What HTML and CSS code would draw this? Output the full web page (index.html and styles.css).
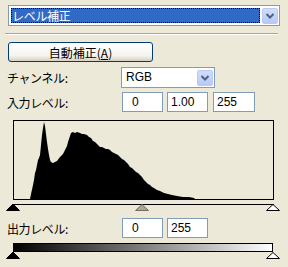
FILE: index.html
```html
<!DOCTYPE html>
<html lang="ja">
<head>
    <meta charset="UTF-8">
    <title>レベル補正</title>
    <link rel="stylesheet" href="styles.css">
</head>
<body>
<div class="panel">
    <div class="combo wide">
        <span class="combo-value selected">レベル補正</span>
        <span class="combo-arrow">
            <svg width="16" height="16" viewBox="0 0 16 16"><path d="M4.5 6 L8 9.5 L11.5 6" fill="none" stroke="#4d6185" stroke-width="2"/></svg>
        </span>
    </div>
    <hr class="sep">
    <button class="btn">自動補正(<u>A</u>)</button>

    <div class="row channel">
        <span class="label">チャンネル:</span>
        <div class="combo small">
            <span class="combo-value">RGB</span>
            <span class="combo-arrow">
                <svg width="16" height="16" viewBox="0 0 16 16"><path d="M4.5 6 L8 9.5 L11.5 6" fill="none" stroke="#4d6185" stroke-width="2"/></svg>
            </span>
        </div>
    </div>

    <div class="row levels">
        <span class="label">入力レベル:</span>
        <span class="field first">0</span>
        <span class="field">1.00</span>
        <span class="field third">255</span>
    </div>

    <svg class="hist" width="280" height="92" viewBox="0 0 280 92">
        <rect x="8.5" y="0.5" width="260" height="79" fill="none" stroke="#000"/>
        <polygon fill="#000" points="25,79 26,74 28,65 29,60 30,53 31,50 33,40 34,38 35,35 36,25 37,15 38,8 39,2 40,6 41,14 42,22 43,29 44,35 45,40 46,42 48,43 50,42 52,41 55,37 58,34 60,30 62,26 63,22 65,16 66,13 68,12 70,13 72,12 75,13 77,14 79,14 82,15 84,17 86,18 88,21 90,22 92,24 95,27 97,27 99,28 101,29 103,29 105,30 107,32 109,33 111,34 113,35 115,37 117,39 119,40 121,42 123,44 125,47 127,48 129,50 131,52 133,53 135,55 137,57 139,60 141,62 143,64 145,65 147,67 149,68 152,70 155,71 159,73 163,74 167,75 172,76 178,77 184,77 189,78 190,79"/>
        <line x1="8" y1="84.5" x2="269" y2="84.5" stroke="#000"/>
        <polygon points="8,84 1.5,90.5 14.5,90.5" fill="#000" stroke="#000"/>
        <polygon points="137,84.5 130.5,90.5 143.5,90.5" fill="#aca899" stroke="#716f64"/>
        <polygon points="268,84.5 261.5,90.5 274.5,90.5" fill="#fff" stroke="#000"/>
    </svg>

    <div class="row levels out">
        <span class="label">出力レベル:</span>
        <span class="field first">0</span>
        <span class="field">255</span>
    </div>

    <svg class="grad" width="280" height="18" viewBox="0 0 280 18">
        <defs>
            <linearGradient id="bw" x1="0" x2="1" y1="0" y2="0">
                <stop offset="0" stop-color="#000"/>
                <stop offset="1" stop-color="#fff"/>
            </linearGradient>
        </defs>
        <rect x="8.5" y="0.5" width="259" height="8" fill="url(#bw)" stroke="#000"/>
        <polygon points="8,9 1.5,15.5 14.5,15.5" fill="#000" stroke="#000"/>
        <polygon points="268,9.5 261.5,15.5 274.5,15.5" fill="#fff" stroke="#000"/>
    </svg>
</div>
</body>
</html>
```

FILE: styles.css
```css
body {
    margin: 0;
    background-color: #ece9d8;
    font-family: "Noto Sans CJK JP", sans-serif;
    font-size: 12px;
    color: #000;
}
.panel {
    padding-top: 5px;
}
.combo {
    box-sizing: border-box;
    display: flex;
    align-items: center;
    height: 21px;
    padding: 1px;
    background-color: #fff;
    border: 1px solid #7f9db9;
}
.combo.wide {
    margin-left: 8px;
    width: 272px;
}
.combo.small {
    width: 94px;
}
.combo-value {
    flex: 1;
    box-sizing: border-box;
    height: 15px;
    margin: 0 2px 0 1px;
    padding-left: 2px;
    line-height: 15px;
    font-family: "Liberation Sans", sans-serif;
    font-size: 12px;
}
.combo-value.selected {
    background-color: #316ac5;
    color: #fff;
    outline: 1px dotted #000;
    outline-offset: -1px;
    font-family: "Noto Sans CJK JP", sans-serif;
    font-size: 12px;
    padding-left: 1px;
    letter-spacing: -0.3px;
}
.combo-arrow {
    box-sizing: border-box;
    width: 16px;
    height: 16px;
    border: 1px solid #b9cbf3;
    border-radius: 2px;
    background: linear-gradient(#d2ddfa, #b7c9f5);
}
.combo-arrow svg {
    display: block;
    margin: -1px;
}
.sep {
    margin: 7px 0 0 5px;
    width: 273px;
    height: 0;
    border: none;
    border-top: 1px solid #aca899;
    border-bottom: 1px solid #fff;
}
.btn {
    display: block;
    box-sizing: border-box;
    margin: 7px 0 0 8px;
    width: 145px;
    height: 20px;
    padding: 0;
    border: 1px solid #003c74;
    border-radius: 3px;
    background: linear-gradient(#fff 0%, #f5f4ef 70%, #d6d0c5 100%);
    font-family: "Noto Sans CJK JP", sans-serif;
    font-size: 12px;
    line-height: 17px;
}
.row {
    display: flex;
    align-items: center;
    padding-left: 7px;
}
.label {
    width: 114px;
    letter-spacing: -0.4px;
}
.channel {
    margin-top: 5px;
}
.levels {
    margin-top: 4px;
}
.levels.out {
    margin-top: 6px;
}
.field {
    box-sizing: border-box;
    width: 41px;
    height: 20px;
    margin-right: 4px;
    padding-left: 3px;
    background-color: #fff;
    border: 1px solid #7f9db9;
    font-family: "Liberation Sans", sans-serif;
    font-size: 12px;
    line-height: 18px;
}
.field.first {
    margin-left: 1px;
    padding-left: 9px;
}
.field.third {
    margin-left: 1px;
    width: 42px;
}
.hist {
    display: block;
    margin: 8px 0 0 5px;
}
.grad {
    display: block;
    margin: 5px 0 0 5px;
}
```
